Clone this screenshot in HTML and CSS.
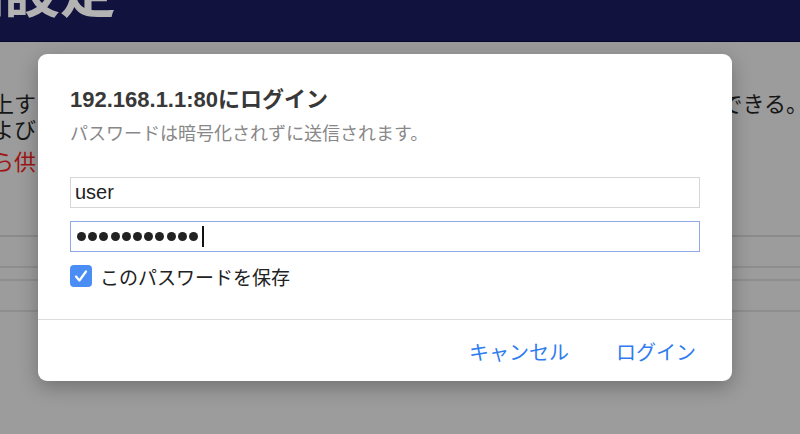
FILE: index.html
```html
<!DOCTYPE html>
<html lang="ja">
<head>
    <meta charset="UTF-8">
    <meta name="viewport" content="width=device-width, initial-scale=1.0">
    <title>詳細設定</title>
    <link rel="stylesheet" href="styles.css">
</head>
<body>
    <div class="page">
        <header class="top">
            <h1 class="top-title">細設定</h1>
        </header>
        <main class="content">
            <p class="line"><span class="cut-left">上す</span><span class="cut-right">できる。</span></p>
            <p class="line"><span class="cut-left">よび</span></p>
            <p class="line warn"><span class="cut-left">ら供</span></p>
            <div class="rows">
                <div class="row tall"></div>
                <div class="row short"></div>
                <div class="row tall"></div>
            </div>
        </main>
    </div>

    <div class="dialog">
        <div class="dialog-body">
            <h2 class="dialog-title">192.168.1.1:80にログイン</h2>
            <p class="dialog-note">パスワードは暗号化されずに送信されます。</p>

            <input class="field" type="text" value="user">
            <div class="field focused">
                <span class="dot"></span><span class="dot"></span><span class="dot"></span><span class="dot"></span><span class="dot"></span><span class="dot"></span><span class="dot"></span><span class="dot"></span><span class="dot"></span><span class="dot"></span><span class="dot"></span><span class="caret"></span>
            </div>

            <label class="remember">
                <span class="check">
                    <svg width="22" height="22" viewBox="0 0 22 22"><path d="M6 11.5l3.4 4L16 6.5" fill="none" stroke="#fff" stroke-width="2.2" stroke-linecap="round" stroke-linejoin="round"/></svg>
                </span>
                このパスワードを保存
            </label>
        </div>
        <div class="dialog-actions">
            <button class="link-btn" type="button">キャンセル</button>
            <button class="link-btn" type="button">ログイン</button>
        </div>
    </div>
</body>
</html>
```

FILE: styles.css
```css
body {
    margin: 0;
    background-color: #9c9c9c;
    font-family: "Liberation Sans", "Noto Sans CJK JP", sans-serif;
    overflow: hidden;
    height: 434px;
}
.top {
    height: 41px;
    background-color: #12123f;
    border-bottom: 1px solid #07072b;
    overflow: hidden;
}
.top-title {
    margin: -40px 0 0 -52px;
    font-family: "Noto Sans CJK JP", sans-serif;
    font-size: 56px;
    line-height: 56px;
    font-weight: bold;
    color: #b3b3b3;
    white-space: nowrap;
}
.content {
    padding-top: 47px;
    font-family: "Noto Sans CJK JP", sans-serif;
    font-size: 22px;
    color: #161616;
}
.line {
    display: flex;
    justify-content: space-between;
    margin: 0;
    line-height: 26px;
    white-space: nowrap;
}
.line.warn {
    margin-top: 6px;
    color: #a01414;
}
.cut-left {
    margin-left: -8px;
}
.cut-right {
    margin-right: -8px;
}
.rows {
    margin-top: 62px;
    border-top: 2px solid #8b8b8b;
}
.row {
    border-bottom: 2px solid #8e8e8e;
}
.row.tall {
    height: 29px;
}
.row.short {
    height: 11px;
}

.dialog {
    position: absolute;
    left: 38px;
    top: 54px;
    width: 694px;
    background-color: #fff;
    border-radius: 9px;
    box-shadow: 0 6px 20px rgba(0,0,0,0.28);
}
.dialog-body {
    padding: 33px 32px 32px;
    border-bottom: 1px solid #dcdcdc;
}
.dialog-title {
    margin: 0;
    font-size: 22px;
    line-height: 26px;
    font-weight: bold;
    color: #383838;
}
.dialog-note {
    margin: 10px 0 0;
    font-size: 18px;
    line-height: 22px;
    color: #888;
}
.field {
    display: flex;
    align-items: center;
    box-sizing: border-box;
    width: 630px;
    height: 31px;
    margin: 32px 0 0;
    padding: 0 4px;
    border: 1px solid #d6d6d6;
    font-family: inherit;
    font-size: 20px;
    color: #222;
    outline: none;
}
.field.focused {
    margin-top: 13px;
    padding-left: 6px;
    border: 1px solid #8ea8e8;
}
.dot {
    width: 9px;
    height: 9px;
    margin-right: 2.2px;
    border-radius: 50%;
    background-color: #222;
}
.caret {
    width: 2px;
    height: 21px;
    margin-left: 2px;
    background-color: #111;
}
.remember {
    display: flex;
    align-items: center;
    gap: 8px;
    height: 22px;
    margin-top: 13px;
    font-size: 19px;
    color: #222;
}
.check {
    width: 22px;
    height: 22px;
    border-radius: 4px;
    background-color: #4a8ef5;
}
.check svg {
    display: block;
}
.dialog-actions {
    display: flex;
    justify-content: flex-end;
    align-items: center;
    gap: 47px;
    height: 61px;
    padding-right: 36px;
}
.link-btn {
    padding: 2px 0 0;
    border: none;
    background: none;
    font-family: inherit;
    font-size: 20px;
    color: #2e7cf0;
    cursor: pointer;
}
```
